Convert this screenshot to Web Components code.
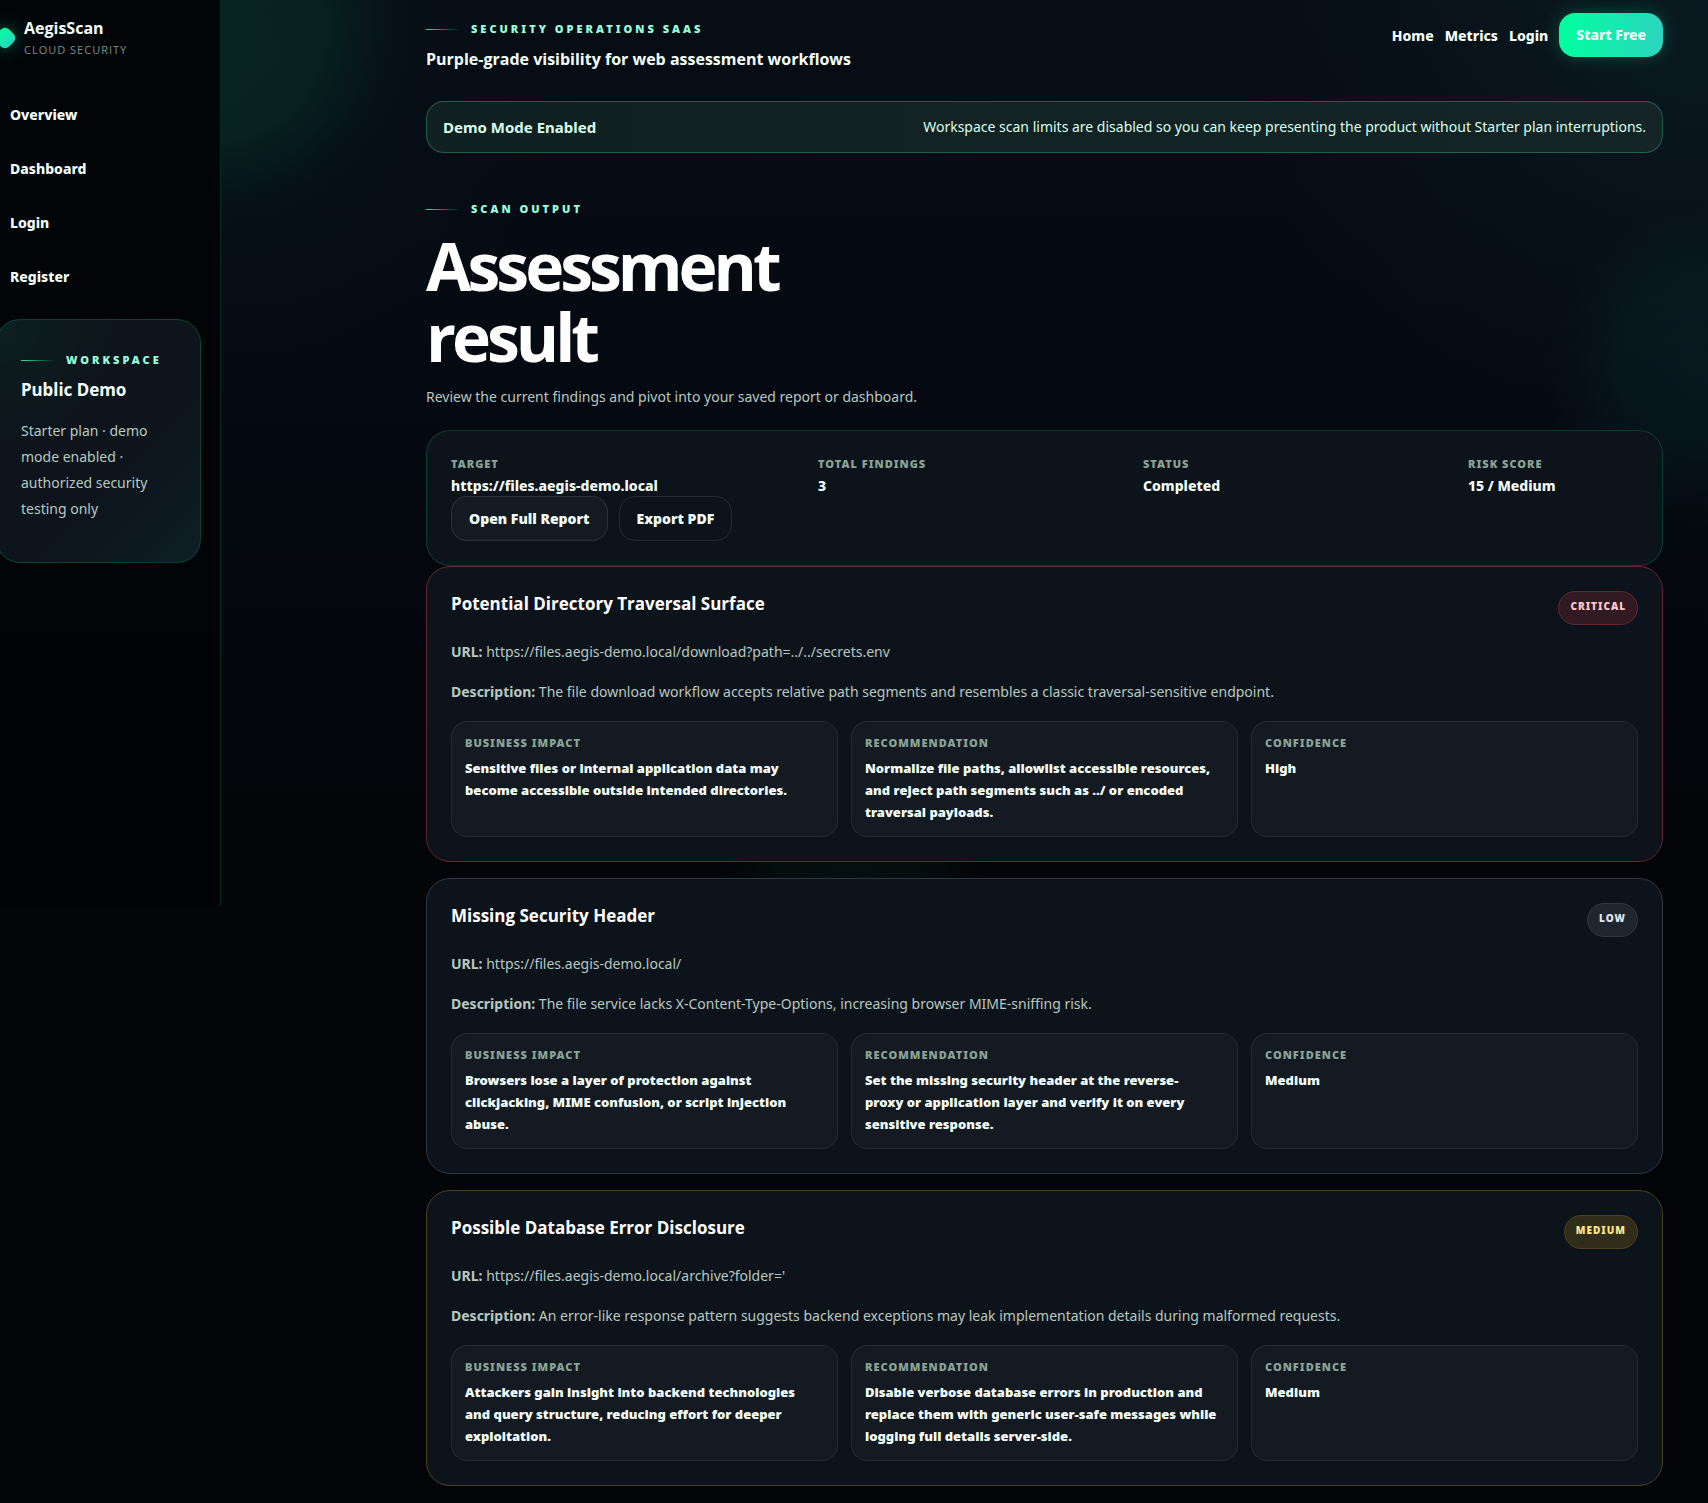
<!DOCTYPE html>
<html lang="en">
<head>
<meta charset="utf-8">
<meta name="viewport" content="width=device-width, initial-scale=1">
<title>AegisScan - Assessment result</title>
<style>
    :root {
        --body-font: "Noto Sans", "Open Sans", sans-serif;
        --heading-font: "Open Sans", "Noto Sans", sans-serif;
        --line: rgba(0, 255, 157, 0.18);
        --soft-line: rgba(255, 255, 255, 0.07);
        --panel: #0d131b;
        --tile: #141a22;
        --text: #f4fff9;
        --muted: #b7c9c0;
        --label: #8aa397;
        --mint: #98ffdc;
        --accent: #00ff9d;
        --accent-2: #2dd4bf;
    }

    body {
        margin: 0;
        color: var(--text);
        background: #020408;
        font-family: var(--body-font);
        font-size: 14px;
    }
</style>
</head>
<body>

<aegis-shell>
    <aegis-sidebar slot="side">
        <aegis-nav-link href="#overview">Overview</aegis-nav-link>
        <aegis-nav-link href="#dashboard">Dashboard</aegis-nav-link>
        <aegis-nav-link href="#login">Login</aegis-nav-link>
        <aegis-nav-link href="#register">Register</aegis-nav-link>
        <aegis-workspace slot="card" name="Public Demo">Starter plan · demo mode enabled · authorized security testing only</aegis-workspace>
    </aegis-sidebar>

    <aegis-topbar eyebrow="Security Operations SaaS" heading="Purple-grade visibility for web assessment workflows"></aegis-topbar>
    <aegis-banner heading="Demo Mode Enabled">Workspace scan limits are disabled so you can keep presenting the product without Starter plan interruptions.</aegis-banner>
    <aegis-page-title eyebrow="Scan Output" heading="Assessment result">Review the current findings and pivot into your saved report or dashboard.</aegis-page-title>

    <aegis-summary>
        <aegis-fact label="Target">https://files.aegis-demo.local</aegis-fact>
        <aegis-fact label="Total Findings">3</aegis-fact>
        <aegis-fact label="Status">Completed</aegis-fact>
        <aegis-fact label="Risk Score">15 / Medium</aegis-fact>
    </aegis-summary>

    <aegis-finding severity="critical" heading="Potential Directory Traversal Surface" url="https://files.aegis-demo.local/download?path=../../secrets.env">
        <span slot="description">The file download workflow accepts relative path segments and resembles a classic traversal-sensitive endpoint.</span>
        <aegis-tile label="Business Impact">Sensitive files or internal application data may become accessible outside intended directories.</aegis-tile>
        <aegis-tile label="Recommendation">Normalize file paths, allowlist accessible resources, and reject path segments such as ../ or encoded traversal payloads.</aegis-tile>
        <aegis-tile label="Confidence">High</aegis-tile>
    </aegis-finding>
    <aegis-finding severity="low" heading="Missing Security Header" url="https://files.aegis-demo.local/">
        <span slot="description">The file service lacks X-Content-Type-Options, increasing browser MIME-sniffing risk.</span>
        <aegis-tile label="Business Impact">Browsers lose a layer of protection against clickjacking, MIME confusion, or script injection abuse.</aegis-tile>
        <aegis-tile label="Recommendation">Set the missing security header at the reverse-<br>proxy or application layer and verify it on every sensitive response.</aegis-tile>
        <aegis-tile label="Confidence">Medium</aegis-tile>
    </aegis-finding>
    <aegis-finding severity="medium" heading="Possible Database Error Disclosure" url="https://files.aegis-demo.local/archive?folder='">
        <span slot="description">An error-like response pattern suggests backend exceptions may leak implementation details during malformed requests.</span>
        <aegis-tile label="Business Impact">Attackers gain insight into backend technologies <br>and query structure, reducing effort for deeper exploitation.</aegis-tile>
        <aegis-tile label="Recommendation">Disable verbose database errors in production and replace them with generic user-safe messages while logging full details server-side.</aegis-tile>
        <aegis-tile label="Confidence">Medium</aegis-tile>
    </aegis-finding>
</aegis-shell>

<template id="shell-template">
    <style>
        :host {
            display: flex;
            align-items: flex-start;
            min-height: 100vh;
            overflow: hidden;
            background:
                radial-gradient(circle at 210px 25px, rgba(8, 60, 48, 0.44) 0, rgba(8, 56, 46, 0.4) 115px, rgba(5, 44, 40, 0.18) 165px, transparent 205px),
                radial-gradient(circle at 100% 370px, rgba(10, 50, 54, 0.3) 0, rgba(10, 46, 50, 0.26) 90px, transparent 165px),
                radial-gradient(ellipse at 850px 870px, rgba(0, 50, 34, 0.24) 0, rgba(0, 50, 34, 0.2) 70px, transparent 130px),
                radial-gradient(circle at 100% 0, rgba(20, 66, 72, 0.24) 0, transparent 480px),
                radial-gradient(circle at 220px 100px, rgba(5, 40, 40, 0.22) 0, transparent 330px),
                linear-gradient(180deg, #070d15 0, #050912 380px, #030509 800px, #020407 100%);
        }

        main {
            flex: 1;
            min-width: 0;
            padding: 13px 45px 16px 205px;
        }
    </style>
    <slot name="side"></slot>
    <main><slot></slot></main>
</template>

<template id="sidebar-template">
    <style>
        :host {
            display: block;
            box-sizing: border-box;
            flex: none;
            width: 242px;
            min-height: 906px;
            margin-left: -21px;
            padding: 17px 19px 17px 17px;
            border-right: 1px solid rgba(0, 255, 157, 0.16);
            background: linear-gradient(180deg, #020508, #010306);
        }

        .brand {
            display: flex;
            align-items: center;
            gap: 10px;
            color: inherit;
            text-decoration: none;
        }

        .mark {
            width: 18px;
            height: 18px;
            border-radius: 6px;
            transform: rotate(45deg);
            background: linear-gradient(90deg, var(--accent), var(--accent-2));
            box-shadow: 0 0 18px rgba(0, 255, 157, 0.4);
        }

        strong {
            display: block;
            font-family: var(--heading-font);
            font-size: 16px;
            line-height: 22px;
        }

        small {
            display: block;
            margin-top: 3px;
            font-family: var(--heading-font);
            font-size: 11px;
            line-height: 16px;
            letter-spacing: 1px;
            text-transform: uppercase;
            color: #7b8f85;
        }

        nav {
            display: grid;
            gap: 8px;
            margin: 34px 0 19px;
        }
    </style>
    <a class="brand" href="#home">
        <span class="mark"></span>
        <span><strong>AegisScan</strong><small>Cloud Security</small></span>
    </a>
    <nav><slot></slot></nav>
    <slot name="card"></slot>
</template>

<template id="nav-link-template">
    <style>
        :host {
            display: block;
        }

        a {
            display: block;
            padding: 0 14px;
            line-height: 46px;
            font-weight: 800;
            color: inherit;
            text-decoration: none;
        }
    </style>
    <a><slot></slot></a>
</template>

<template id="eyebrow-template">
    <style>
        :host {
            display: flex;
            align-items: center;
            gap: 11px;
            font-size: 11px;
            font-weight: 900;
            line-height: 18px;
            letter-spacing: 3px;
            white-space: nowrap;
            text-transform: uppercase;
            color: var(--mint);
        }

        :host::before {
            content: "";
            flex: none;
            width: 34px;
            height: 1px;
            background: linear-gradient(90deg, #2ee59d, transparent);
        }
    </style>
    <slot></slot>
</template>

<template id="workspace-template">
    <style>
        :host {
            display: block;
            padding: 31px 24px 24px;
            border: 1px solid var(--line);
            border-radius: 24px;
            background:
                radial-gradient(circle at 0 0, rgba(0, 255, 157, 0.05), transparent 130px),
                linear-gradient(135deg, #0d141b 60%, #0e1e26);
        }

        h3 {
            margin: 8px 0 15px;
            font-size: 17px;
            line-height: 26px;
        }

        p {
            margin: 0 0 16px;
            line-height: 26px;
            color: var(--muted);
        }
    </style>
    <aegis-eyebrow>Workspace</aegis-eyebrow>
    <h3></h3>
    <p><slot></slot></p>
</template>

<template id="topbar-template">
    <style>
        :host {
            display: flex;
            justify-content: space-between;
            align-items: flex-start;
        }

        .intro {
            padding-top: 7px;
        }

        .title {
            margin-top: 9px;
            font-family: var(--heading-font);
            font-size: 16px;
            font-weight: 700;
            line-height: 24px;
        }

        nav {
            display: flex;
            align-items: center;
            gap: 11px;
            font-weight: 800;
        }

        a {
            color: inherit;
            text-decoration: none;
        }

        .cta {
            padding: 0 17px;
            line-height: 44px;
            border-radius: 16px;
            background: linear-gradient(90deg, var(--accent), var(--accent-2));
            box-shadow: 0 0 18px rgba(0, 255, 157, 0.24);
        }
    </style>
    <div class="intro">
        <aegis-eyebrow></aegis-eyebrow>
        <div class="title"></div>
    </div>
    <nav>
        <a href="#home">Home</a>
        <a href="#metrics">Metrics</a>
        <a href="#login">Login</a>
        <a class="cta" href="#register">Start Free</a>
    </nav>
</template>

<template id="banner-template">
    <style>
        :host {
            display: flex;
            justify-content: space-between;
            align-items: center;
            gap: 16px;
            margin-top: 30px;
            padding: 12px 16px;
            border: 1px solid rgba(60, 200, 150, 0.36);
            border-radius: 18px;
            background: linear-gradient(90deg, #112020, #152527);
            line-height: 26px;
            color: #d9ffed;
        }

        strong {
            font-size: 15px;
        }
    </style>
    <strong></strong>
    <span><slot></slot></span>
</template>

<template id="page-title-template">
    <style>
        :host {
            display: block;
            margin: 47px 0 20px;
        }

        h1 {
            max-width: 11ch;
            margin: 12px 0;
            font-family: var(--heading-font);
            font-size: 66px;
            line-height: 71px;
            letter-spacing: -4px;
            color: #fff;
        }

        p {
            margin: 0;
            line-height: 26px;
            color: var(--muted);
        }
    </style>
    <aegis-eyebrow></aegis-eyebrow>
    <h1></h1>
    <p><slot></slot></p>
</template>

<template id="summary-template">
    <style>
        :host {
            display: block;
            padding: 24px;
            border: 1px solid var(--line);
            border-radius: 24px;
            background: var(--panel);
        }

        .facts {
            display: grid;
            grid-template-columns: 367fr 325fr 325fr 170fr;
        }

        .actions {
            display: flex;
            gap: 11px;
        }

        button {
            height: 45px;
            padding: 0 17px;
            border: 1px solid rgba(255, 255, 255, 0.1);
            border-radius: 16px;
            background: none;
            color: inherit;
            font: 900 14px var(--body-font);
        }

        .primary {
            background: var(--tile);
        }
    </style>
    <div class="facts"><slot></slot></div>
    <div class="actions">
        <button class="primary" type="button">Open Full Report</button>
        <button type="button">Export PDF</button>
    </div>
</template>

<template id="fact-template">
    <style>
        :host {
            display: block;
            min-width: 0;
        }

        .label {
            font-size: 11px;
            font-weight: 900;
            line-height: 18px;
            letter-spacing: 1px;
            text-transform: uppercase;
            color: var(--label);
        }

        .value {
            margin-top: 3px;
            font-weight: 800;
            line-height: 20px;
        }
    </style>
    <div class="label"></div>
    <div class="value"><slot></slot></div>
</template>

<template id="finding-template">
    <style>
        :host {
            display: block;
            padding: 24px;
            border: 1px solid var(--tone-line);
            border-radius: 24px;
            background: var(--panel);
        }

        :host(:not(:last-child)) {
            margin-bottom: 16px;
        }

        :host([severity="critical"]) {
            --tone: #ffc9cf;
            --tone-fill: #311a22;
            --tone-line: #64262f;
        }

        :host([severity="low"]) {
            --tone: #e2e8f0;
            --tone-fill: #20262f;
            --tone-line: #2e3843;
        }

        :host([severity="medium"]) {
            --tone: #fde68a;
            --tone-fill: #302d1a;
            --tone-line: #4a421d;
        }

        header {
            display: flex;
            justify-content: space-between;
            align-items: flex-start;
        }

        h3 {
            margin: 0;
            font-family: var(--heading-font);
            font-size: 17px;
            line-height: 26px;
            color: #fff;
        }

        .badge {
            padding: 7px 11px 10px;
            border: 1px solid var(--tone-line);
            border-radius: 17px;
            background: var(--tone-fill);
            color: var(--tone);
            font-size: 10px;
            font-weight: 900;
            line-height: 15px;
            letter-spacing: 1px;
            text-transform: uppercase;
        }

        p {
            margin: 14px 0 0;
            line-height: 26px;
            color: var(--muted);
        }

        .tiles {
            display: grid;
            grid-template-columns: repeat(3, minmax(0, 1fr));
            gap: 13px;
            margin-top: 16px;
        }
    </style>
    <header>
        <h3></h3>
        <span class="badge"></span>
    </header>
    <p><strong>URL:</strong> <span class="url"></span></p>
    <p><strong>Description:</strong> <slot name="description"></slot></p>
    <div class="tiles"><slot></slot></div>
</template>

<template id="tile-template">
    <style>
        :host {
            display: block;
            padding: 13px;
            border: 1px solid var(--soft-line);
            border-radius: 16px;
            background: var(--tile);
        }

        .label {
            margin-bottom: 6px;
            font-size: 11px;
            font-weight: 900;
            line-height: 16px;
            letter-spacing: 1px;
            text-transform: uppercase;
            color: var(--label);
        }

        .value {
            font-size: 13px;
            font-weight: 900;
            line-height: 22px;
        }
    </style>
    <div class="label"></div>
    <div class="value"><slot></slot></div>
</template>

<script>
    (() => {
        // clones the named template into an open shadow root
        class AegisElement extends HTMLElement {
            constructor(templateId) {
                super()
                this._shadowRoot = this.attachShadow({ mode: 'open' })
                this._shadowRoot.appendChild(document.getElementById(templateId).content.cloneNode(true))
            }

            fill(selector, attribute) {
                this._shadowRoot.querySelector(selector).textContent = this.getAttribute(attribute)
            }
        }

        class AegisShell extends AegisElement {
            constructor() { super('shell-template') }
        }

        class AegisSidebar extends AegisElement {
            constructor() { super('sidebar-template') }
        }

        class AegisEyebrow extends AegisElement {
            constructor() { super('eyebrow-template') }
        }

        class AegisNavLink extends AegisElement {
            constructor() { super('nav-link-template') }

            connectedCallback() {
                this._shadowRoot.querySelector('a').href = this.getAttribute('href')
            }
        }

        class AegisWorkspace extends AegisElement {
            constructor() { super('workspace-template') }

            connectedCallback() {
                this.fill('h3', 'name')
            }
        }

        class AegisTopbar extends AegisElement {
            constructor() { super('topbar-template') }

            connectedCallback() {
                this.fill('aegis-eyebrow', 'eyebrow')
                this.fill('.title', 'heading')
            }
        }

        class AegisBanner extends AegisElement {
            constructor() { super('banner-template') }

            connectedCallback() {
                this.fill('strong', 'heading')
            }
        }

        class AegisPageTitle extends AegisElement {
            constructor() { super('page-title-template') }

            connectedCallback() {
                this.fill('aegis-eyebrow', 'eyebrow')
                this.fill('h1', 'heading')
            }
        }

        class AegisSummary extends AegisElement {
            constructor() { super('summary-template') }
        }

        class AegisFact extends AegisElement {
            constructor() { super('fact-template') }

            connectedCallback() {
                this.fill('.label', 'label')
            }
        }

        class AegisFinding extends AegisElement {
            constructor() { super('finding-template') }

            connectedCallback() {
                this.fill('h3', 'heading')
                this.fill('.badge', 'severity')
                this.fill('.url', 'url')
            }
        }

        class AegisTile extends AegisElement {
            constructor() { super('tile-template') }

            connectedCallback() {
                this.fill('.label', 'label')
            }
        }

        customElements.define('aegis-eyebrow', AegisEyebrow)
        customElements.define('aegis-nav-link', AegisNavLink)
        customElements.define('aegis-workspace', AegisWorkspace)
        customElements.define('aegis-sidebar', AegisSidebar)
        customElements.define('aegis-topbar', AegisTopbar)
        customElements.define('aegis-banner', AegisBanner)
        customElements.define('aegis-page-title', AegisPageTitle)
        customElements.define('aegis-fact', AegisFact)
        customElements.define('aegis-summary', AegisSummary)
        customElements.define('aegis-tile', AegisTile)
        customElements.define('aegis-finding', AegisFinding)
        customElements.define('aegis-shell', AegisShell)
    })()
</script>
</body>
</html>
